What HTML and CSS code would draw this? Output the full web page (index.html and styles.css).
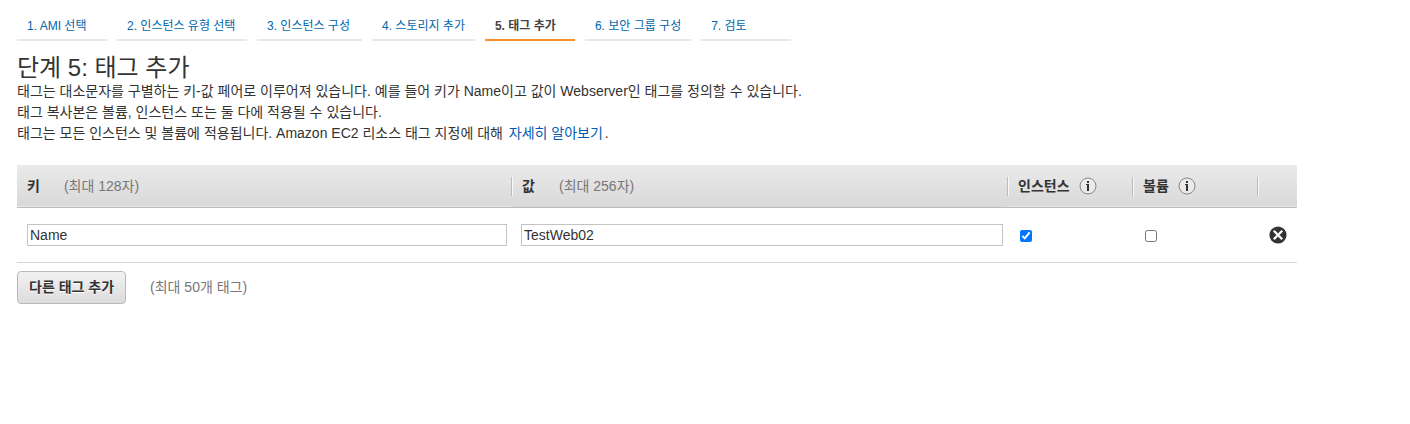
FILE: index.html
```html
<!DOCTYPE html>
<html lang="ko">
<head>
<meta charset="utf-8">
<title>단계 5: 태그 추가</title>
<link rel="stylesheet" href="styles.css">
</head>
<body>
<nav class="steps">
  <a class="step" href="#ami">1. AMI 선택</a>
  <a class="step step-wide" href="#type">2. 인스턴스 유형 선택</a>
  <a class="step step-medium" href="#config">3. 인스턴스 구성</a>
  <a class="step" href="#storage">4. 스토리지 추가</a>
  <a class="step step-active" href="#tags" aria-current="step">5. 태그 추가</a>
  <a class="step step-medium" href="#security">6. 보안 그룹 구성</a>
  <a class="step" href="#review">7. 검토</a>
</nav>
<main class="content">
  <h1 class="title">단계 5: 태그 추가</h1>
  <p class="intro">태그는 대소문자를 구별하는 키-값 페어로 이루어져 있습니다. 예를 들어 키가 Name이고 값이 Webserver인 태그를 정의할 수 있습니다.</p>
  <p class="intro">태그 복사본은 볼륨, 인스턴스 또는 둘 다에 적용될 수 있습니다.</p>
  <p class="intro">태그는 모든 인스턴스 및 볼륨에 적용됩니다. Amazon EC2 리소스 태그 지정에 대해 <a class="more" href="#more">자세히 알아보기</a>.</p>

  <table class="tags">
    <colgroup>
      <col class="col-key"><col><col class="col-check"><col class="col-check"><col class="col-remove">
    </colgroup>
    <thead>
      <tr>
        <th scope="col"><div class="head"><span id="key-label">키</span><span class="limit">(최대 128자)</span></div></th>
        <th scope="col"><div class="head"><span id="value-label">값</span><span class="limit">(최대 256자)</span></div></th>
        <th scope="col"><div class="head head-info"><span id="instance-label">인스턴스</span>
          <svg class="info" viewBox="0 0 18 18" aria-hidden="true"><circle cx="9" cy="9" r="8" fill="#eaeaea" stroke="#888"/><path d="M8 4h2v2H8zM8 7h2v7H8zM7 7h1v1H7z" fill="#333"/></svg></div></th>
        <th scope="col"><div class="head head-info"><span id="volume-label">볼륨</span>
          <svg class="info" viewBox="0 0 18 18" aria-hidden="true"><circle cx="9" cy="9" r="8" fill="#eaeaea" stroke="#888"/><path d="M8 4h2v2H8zM8 7h2v7H8zM7 7h1v1H7z" fill="#333"/></svg></div></th>
        <th scope="col"><div class="head"></div></th>
      </tr>
    </thead>
    <tbody>
      <tr>
        <td><input class="field" type="text" value="Name" aria-labelledby="key-label"></td>
        <td><input class="field" type="text" value="TestWeb02" aria-labelledby="value-label"></td>
        <td><input class="check" type="checkbox" checked aria-labelledby="instance-label"></td>
        <td><input class="check" type="checkbox" aria-labelledby="volume-label"></td>
        <td><button class="remove" type="button" aria-label="태그 제거"><svg class="remove-icon" viewBox="0 0 18 18" aria-hidden="true"><circle cx="9" cy="9" r="8.6" fill="#333"/><path d="M4.8 4.8l8.4 8.4M13.2 4.8l-8.4 8.4" stroke="#fff" stroke-width="2.3"/></svg></button></td>
      </tr>
    </tbody>
  </table>

  <div class="actions">
    <button class="add" type="button">다른 태그 추가</button>
    <span class="limit">(최대 50개 태그)</span>
  </div>
</main>
</body>
</html>
```
FILE: styles.css
```css
* {
  box-sizing: border-box;
}

body {
  margin: 0;
  padding: 10px 113px 20px 17px;
  background: #fff;
  color: #333;
  font: 14px/21px "Liberation Sans", "Noto Sans CJK KR", sans-serif;
}

.steps {
  display: flex;
  flex-wrap: wrap;
  gap: 10px;
}

.step {
  min-width: 90px;
  height: 31px;
  padding: 6px 10px 3px;
  border-bottom: 2px solid #e7e7e7;
  color: #0066ab;
  font-size: 12px;
  line-height: 20px;
  text-decoration: none;
}

.step-medium {
  min-width: 105px;
}

.step-wide {
  min-width: 130px;
}

.step-active {
  border-color: #f7902f;
  color: #444;
  font-weight: bold;
}

.title {
  margin: 14px 0 0;
  font-size: 24px;
  font-weight: normal;
  line-height: 26px;
}

.intro {
  margin: 0;
}

.more {
  margin: 0 2px;
  color: #005bb0;
  text-decoration: none;
}

.tags {
  width: 100%;
  margin-top: 21px;
  border-collapse: collapse;
  table-layout: fixed;
}

.col-key {
  width: 38.6%;
}

.col-check {
  width: 125px;
}

.col-remove {
  width: 40px;
}

.tags thead {
  background: linear-gradient(#eaeaea, #d9d9d9);
  border-bottom: 1px solid #bbb;
}

.tags th {
  height: 42px;
  padding: 1px 0 0;
  text-align: left;
}

.head {
  display: flex;
  align-items: center;
  gap: 24px;
  height: 19px;
  padding-left: 10px;
}

.head-info {
  gap: 9px;
}

.tags th + th .head {
  border-left: 1px solid #bbb;
  box-shadow: inset 1px 0 #f8f8f8;
}

.limit {
  color: #777;
  font-weight: normal;
}

.info {
  width: 18px;
  height: 18px;
}

.tags tbody tr {
  border-bottom: 1px solid #d5d5d5;
}

.tags td {
  height: 55px;
  padding: 0 4px 0 10px;
}

.field {
  display: block;
  width: 100%;
  height: 22px;
  padding: 0 2px;
  border: 1px solid #c3c3c3;
  color: #333;
  font: inherit;
}

.check {
  display: block;
  width: 12px;
  height: 12px;
  margin: 2px 3px 0;
}

.remove {
  display: block;
  margin-left: auto;
  margin-right: 6px;
  padding: 0;
  border: 0;
  background: none;
}

.remove-icon {
  display: block;
  width: 18px;
  height: 18px;
}

.actions {
  display: flex;
  align-items: center;
  gap: 24px;
  margin-top: 8px;
}

.add {
  height: 33px;
  padding: 1px 11px 0;
  border: 1px solid #b9b9b9;
  border-radius: 4px;
  background: linear-gradient(#f2f2f2, #dcdcdc);
  color: #333;
  font: inherit;
  font-weight: bold;
  text-shadow: 0 1px #fff;
}
```
